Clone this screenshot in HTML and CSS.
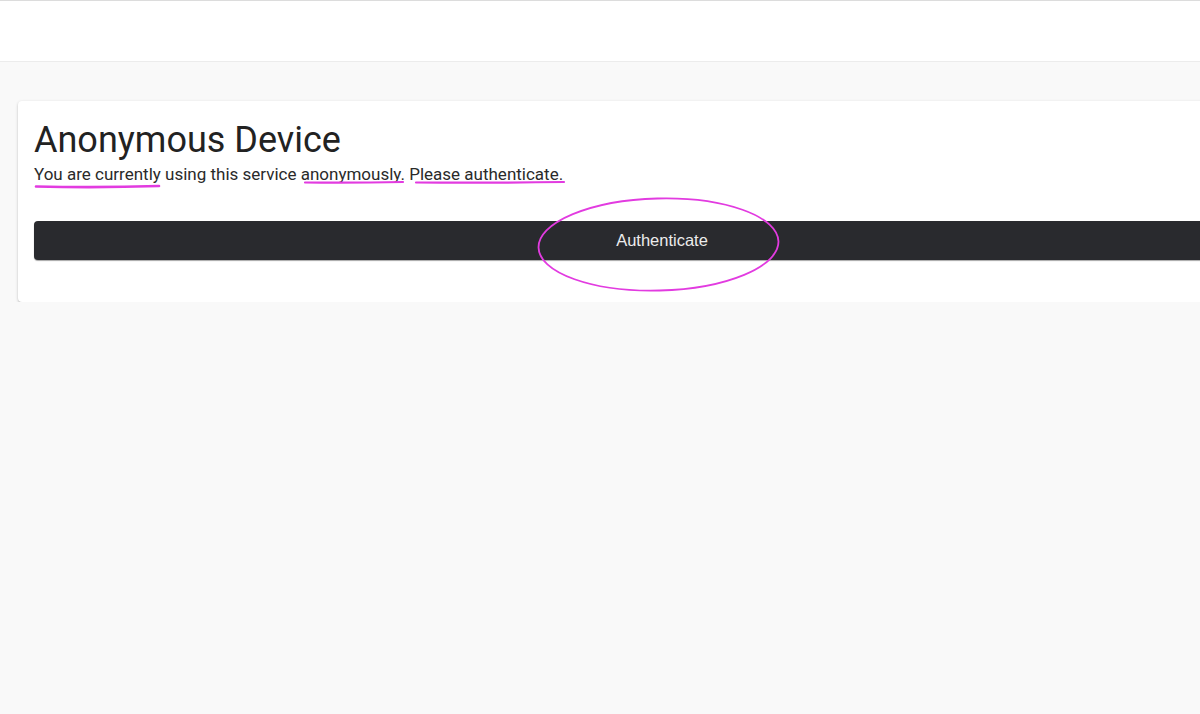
FILE: index.html
```html
<!DOCTYPE html>
<html lang="en">
<head>
<meta charset="utf-8">
<title>Anonymous Device</title>
<link rel="stylesheet" href="styles.css">
</head>
<body>
<header class="topbar"></header>
<main class="page">
  <section class="card">
    <h1 class="title">Anonymous Device</h1>
    <p class="subtitle">You are currently using this service anonymously. Please authenticate.</p>
    <button class="auth-btn" type="button">Authenticate</button>
  </section>
</main>
<svg class="marks" width="1200" height="714" viewBox="0 0 1200 714" aria-hidden="true">
  <g fill="none" stroke="#e23be0" stroke-linecap="round">
    <path d="M36 186.5 Q98 188 159 186" stroke-width="2.6"/>
    <path d="M305 182.5 Q354 183 403 182" stroke-width="2.2"/>
    <path d="M416 182.5 Q490 183 564 182" stroke-width="2.2"/>
    <ellipse cx="658.5" cy="244.5" rx="120" ry="46" stroke-width="1.8" transform="rotate(-1.5 658.5 244.5)"/>
  </g>
</svg>
</body>
</html>
```
FILE: styles.css
```css
html, body {
  margin: 0;
  padding: 0;
  overflow: hidden;
}
body {
  width: 1200px;
  height: 714px;
  background: #f9f9f9;
  font-family: Roboto, "Liberation Sans", sans-serif;
  color: #212121;
  position: relative;
}
.topbar {
  background: #ffffff;
  border-top: 1px solid #dcdcdc;
  border-bottom: 1px solid #ececec;
  box-sizing: border-box;
  height: 62px;
}
.page {
  padding: 39px 0 0 18px;
  overflow: hidden;
}
.card {
  width: 1288px;
  box-sizing: border-box;
  background: #ffffff;
  border-radius: 4px;
  box-shadow: 0 1px 3px rgba(0,0,0,0.22), 0 1px 1px rgba(0,0,0,0.08);
  padding: 18px 16px 42px 16px;
  display: flex;
  flex-direction: column;
}
.title {
  margin: 0;
  font-size: 36px;
  line-height: 42px;
  font-weight: 400;
  color: #222222;
}
.subtitle {
  margin: 1px 0 0;
  font-size: 17px;
  line-height: 24px;
  color: #2a2a2a;
}
.auth-btn {
  margin-top: 35px;
  height: 39px;
  width: 100%;
  border: none;
  border-radius: 4px;
  background: #292a2e;
  box-shadow: 0 1px 1px rgba(0,0,0,0.35);
  color: #ececec;
  font-family: "Liberation Sans", Arial, sans-serif;
  font-size: 16.5px;
  cursor: pointer;
}
.marks {
  position: absolute;
  left: 0;
  top: 0;
  pointer-events: none;
}
```
